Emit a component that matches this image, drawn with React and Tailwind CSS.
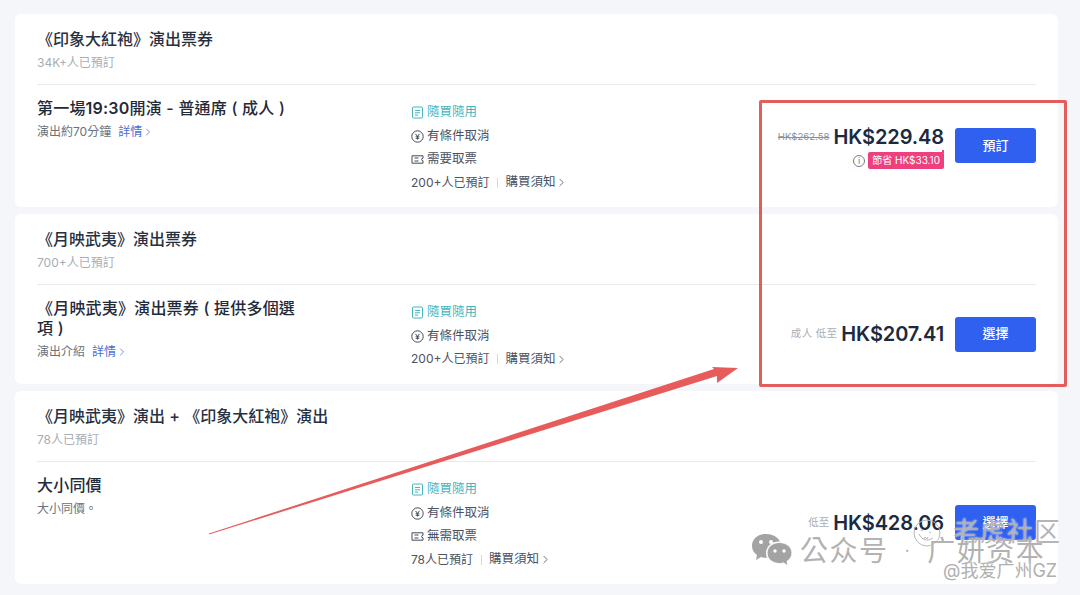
import React from 'react';
import { ChevronRight } from 'lucide-react';

const FONT = "font-['Inter','Noto_Sans_CJK_TC',sans-serif]";

function PlanIcon() {
    return (
        <svg width="13" height="13" viewBox="0 0 13 13" fill="none" stroke="#45b5bd" strokeWidth="1">
            <rect x="1.5" y="1" width="10" height="11" rx="1" />
            <path d="M4 4.5h5M4 6.8h5M4 9.1h3" />
        </svg>
    );
}

function YenIcon() {
    return (
        <svg width="13" height="13" viewBox="0 0 13 13" fill="none" stroke="#444b55" strokeWidth="1">
            <circle cx="6.5" cy="6.5" r="5.7" />
            <path d="M4.5 3.8l2 2.7 2-2.7M6.5 6.5v3M4.7 6.8h3.6M4.7 8.3h3.6" />
        </svg>
    );
}

function TicketIcon() {
    return (
        <svg width="13" height="13" viewBox="0 0 13 13" fill="none" stroke="#444b55" strokeWidth="1">
            <path d="M1 2.800h11v2.400a1.300 1.300 0 000 2.600v2.400H1z" />
            <path d="M3.500 5h4M3.500 8h4" />
        </svg>
    );
}

function Feature({ icon, text, color = 'text-[#4b5260]' }) {
    return (
        <div className={`flex h-[23.4px] items-center gap-[3px] text-[12.5px] ${color}`}>
            {icon}
            <span>{text}</span>
        </div>
    );
}

function Card({ title, sub, heading, desc, descLink, pickup, booked, height, right }) {
    return (
        <div className={`flex w-full flex-col rounded-md bg-white px-[22px] ${height}`}>
            <div className="flex h-[71px] shrink-0 flex-col border-b border-[#e8eaee] pt-[14px]">
                <div className="text-[16px] leading-[22px] font-medium text-[#26303f]">{title}</div>
                <div className="mt-[4px] text-[12px] leading-[18px] text-[#a9adb4]">{sub}</div>
            </div>
            <div className="flex min-h-0 flex-1">
                <div className="w-[374px] shrink-0 pt-[13px]">
                    <div className="w-[264px] text-[16px] leading-[20px] font-medium tracking-[0.2px] text-[#1f2a3a]">{heading}</div>
                    <div className="mt-[5px] flex items-center text-[12px] leading-[18px] text-[#6c727c]">
                        <span>{desc}</span>
                        {descLink && (
                            <span className="ml-[7px] flex items-center text-[#4a6fd0]">
                                詳情
                                <ChevronRight size={12} strokeWidth={1.5} />
                            </span>
                        )}
                    </div>
                </div>
                <div className="flex-1 pt-[16px]">
                    <Feature icon={<PlanIcon />} text="隨買隨用" color="text-[#45b5bd]" />
                    <Feature icon={<YenIcon />} text="有條件取消" />
                    {pickup && <Feature icon={<TicketIcon />} text={pickup} />}
                    <div className="flex h-[23.4px] items-center text-[12.5px] text-[#4b5260]">
                        <span className="text-[12px]">{booked}</span>
                        <span className="mx-[7.5px] h-[10px] w-px bg-[#d5d8dd]" />
                        <span>購買須知</span>
                        <ChevronRight size={13} strokeWidth={1.5} />
                    </div>
                </div>
                <div className="flex shrink-0 items-center gap-[11px] pb-px">
                    {right}
                </div>
            </div>
        </div>
    );
}

function Price({ value }) {
    return <span className="text-[20px] leading-[26px] font-semibold tracking-[-0.1px] text-[#1b2a41]">{value}</span>;
}

function Btn({ label }) {
    return (
        <div className="flex h-[35px] w-[81px] items-center justify-center rounded-[3px] bg-[#2f60f0] text-[13px] font-medium text-white">
            {label}
        </div>
    );
}

function WeChatIcon() {
    return (
        <svg width="42" height="36" viewBox="0 0 42 36" fill="#a3a3a3">
            <path d="M15 1C7 1 1 6 1 13c0 4 2 7 5 9l-1 5 5-3c2 .6 3.500.8 5 .8h1c-.7-1.500-1-3-1-4.500C15 13 21 8.500 28 8.500h1C27 4 21.500 1 15 1z" />
            <path d="M41 20c0-6-5.700-10.500-12.500-10.500S16 14 16 20s5.700 10.500 12.500 10.500c1.300 0 2.700-.2 4-.6l4.500 3-1-4.500c3-2 5-5 5-8.400z" stroke="#fff" strokeWidth="1" />
            <circle cx="10" cy="9" r="2" fill="#fff" />
            <circle cx="20" cy="9" r="2" fill="#fff" />
            <circle cx="24" cy="18" r="1.700" fill="#fff" />
            <circle cx="33" cy="18" r="1.700" fill="#fff" />
        </svg>
    );
}

function TigerLogo() {
    return (
        <svg className="absolute top-[519px] left-[913px]" width="28" height="28" viewBox="0 0 28 28" fill="none" stroke="#b8b8b8" strokeWidth="1">
            <circle cx="14" cy="14" r="13" />
            <path d="M6 15c3 6 8 8 14 4M8 11l2 1M16 13l2 1M11 20l1-2 2 2 1-2" />
        </svg>
    );
}

function App() {
    return (
        <div className={`relative flex h-[595px] w-[1080px] flex-col gap-[7px] overflow-hidden bg-[#f4f6fa] pt-[14px] pr-[22px] pl-[15px] ${FONT}`}>
            <Card
                height="h-[193px]"
                title="《印象大紅袍》演出票券"
                sub="34K+人已預訂"
                heading={<>第一場<span className="font-semibold">19:30</span>開演 - 普通席 ( 成人 )</>}
                desc="演出約70分鐘"
                descLink
                pickup="需要取票"
                booked="200+人已預訂"
                right={
                    <>
                        <div className="flex flex-col items-end pt-[2px]">
                            <div className="flex items-center gap-[4px]">
                                <span className="text-[9.6px] text-[#8a9099] line-through">HK$262.58</span>
                                <Price value="HK$229.48" />
                            </div>
                            <div className="mt-[2px] flex items-center gap-[3px]">
                                <span className="flex h-[12px] w-[12px] items-center justify-center rounded-full border border-[#777c84] text-[9px] leading-none text-[#777c84]">i</span>
                                <span className="relative flex h-[17px] items-center rounded-[2px] bg-[#ee3f7e] px-[4px] text-[10px] text-white">
                                    節省 HK$33.10
                                    <span className="absolute -top-[2px] right-0 h-[3px] w-[2px] bg-[#ee3f7e]" />
                                </span>
                            </div>
                        </div>
                        <Btn label="預訂" />
                    </>
                }
            />
            <Card
                height="h-[170px]"
                title="《月映武夷》演出票券"
                sub="700+人已預訂"
                heading="《月映武夷》演出票券 ( 提供多個選項 )"
                desc="演出介紹"
                descLink
                booked="200+人已預訂"
                right={
                    <>
                        <div className="flex items-center gap-[4px]">
                            <span className="text-[10.5px] tracking-[0.3px] text-[#a9adb4]">成人 低至</span>
                            <Price value="HK$207.41" />
                        </div>
                        <Btn label="選擇" />
                    </>
                }
            />
            <Card
                height="h-[193px]"
                title="《月映武夷》演出 + 《印象大紅袍》演出"
                sub="78人已預訂"
                heading="大小同價"
                desc="大小同價。"
                pickup="無需取票"
                booked="78人已預訂"
                right={
                    <>
                        <div className="flex items-center gap-[4px]">
                            <span className="text-[10.5px] text-[#a9adb4]">低至</span>
                            <Price value="HK$428.06" />
                        </div>
                        <Btn label="選擇" />
                    </>
                }
            />

            {/* red annotation box */}
            <div className="absolute top-[100px] left-[759px] h-[287px] w-[308px] rounded-[2px] border-[3px] border-[#e35d5d]" />

            {/* red arrow */}
            <svg className="absolute top-0 left-0" width="1080" height="595" viewBox="0 0 1080 595" fill="#e85b5b">
                <polygon points="209,533.500 209,534.500 717,376 717,383 738,368 712,367 714,369" />
            </svg>

            {/* watermark */}
            <TigerLogo />
            <div className="absolute top-[517px] left-[953px] text-[26px] leading-[30px] tracking-[1px] whitespace-nowrap text-[#a8a8a8]/85 [text-shadow:0_0_2px_#fff]">
                老虎社区
            </div>
            <div className="absolute top-[533px] left-[751px] flex items-center gap-[7px]">
                <WeChatIcon />
                <div className="flex items-center text-[28px] leading-[36px] tracking-[1.500px] whitespace-nowrap text-[#a8a8a8]/90 [text-shadow:0_0_2px_#fff]">
                    <span>公众号</span>
                    <span className="mx-[16px] text-[18px]">·</span>
                    <span>广妍资本</span>
                </div>
            </div>
            <div className="absolute top-[560px] left-[943px] text-[18px] leading-[22px] whitespace-nowrap text-[#b0b0b0] [text-shadow:0_0_2px_#fff]">
                @我爱广州GZ
            </div>
        </div>
    );
}

export default App;
